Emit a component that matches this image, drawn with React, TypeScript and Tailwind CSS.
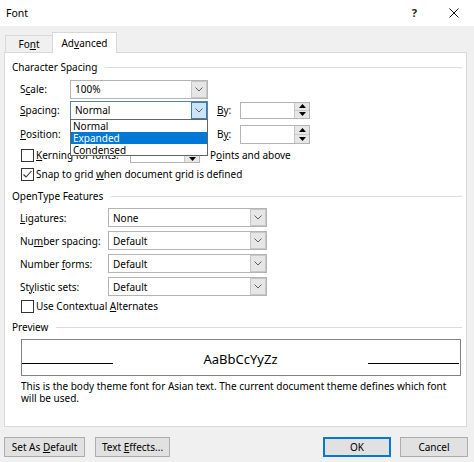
import React from "react";

const U = ({ c }: { c: string }) => <span className="underline underline-offset-[1px] decoration-[1px]">{c}</span>;

const Chevron = () => (
  <svg width="8" height="5" viewBox="0 0 8 5">
    <polyline points="0.5,0.5 4,4 7.5,0.5" fill="none" stroke="#606060" strokeWidth="1" />
  </svg>
);

const Combo = ({ value, w, focused }: { value: string; w: string; focused?: boolean }) => (
  <div className={`flex h-[19px] ${w} border ${focused ? "border-[#5b7fa6]" : "border-[#b4b4b4]"} bg-white`}>
    <div className="flex flex-1 items-center pl-[4px]">{value}</div>
    <div
      className={`flex w-[16px] items-center justify-center border ${
        focused ? "border-[#3c7fb1] bg-[#cce4f7]" : "border-[#c8c8c8] bg-[#e6e6e6]"
      }`}
    >
      <Chevron />
    </div>
  </div>
);

const Up = () => (
  <svg width="7" height="4" viewBox="0 0 7 4">
    <polygon points="0,4 3.5,0 7,4" fill="#000" />
  </svg>
);
const Down = () => (
  <svg width="7" height="4" viewBox="0 0 7 4">
    <polygon points="0,0 3.5,4 7,0" fill="#000" />
  </svg>
);

const Spin = ({ w, h }: { w: string; h: string }) => (
  <div className={`flex ${h} ${w} border border-[#b4b4b4] bg-white`}>
    <div className="flex-1" />
    <div className="flex w-[15px] flex-col border-l border-[#c8c8c8]">
      <div className="flex flex-1 items-center justify-center border-b border-[#c8c8c8] bg-[#e6e6e6]">
        <Up />
      </div>
      <div className="flex flex-1 items-center justify-center bg-[#e6e6e6]">
        <Down />
      </div>
    </div>
  </div>
);

const Check = ({ checked }: { checked?: boolean }) => (
  <div className="flex h-[13px] w-[13px] items-center justify-center border border-[#333333] bg-white">
    {checked && (
      <svg width="11" height="11" viewBox="0 0 11 11">
        <polyline points="1.5,5.5 4,8 9.5,2" fill="none" stroke="#333" strokeWidth="1.1" />
      </svg>
    )}
  </div>
);

const Header = ({ children }: { children: React.ReactNode }) => (
  <div className="flex h-[14px] items-center pl-[7px] pr-[4px]">
    <span className="whitespace-nowrap">{children}</span>
    <div className="ml-[8px] h-px flex-1 bg-[#dcdcdc]" />
  </div>
);

const Btn = ({ children, w, primary }: { children: React.ReactNode; w: string; primary?: boolean }) => (
  <div
    className={`flex h-[20px] ${w} items-center justify-center bg-[#e1e1e1] ${
      primary ? "border-2 border-[#0078d7]" : "border border-[#adadad]"
    }`}
  >
    {children}
  </div>
);

export default function App() {
  return (
    <div className="relative h-[462px] w-[474px] overflow-hidden bg-[#f0f0f0] font-['Noto_Sans',sans-serif] text-[10px] leading-[14px] text-black">
      {/* Title bar */}
      <div className="flex h-[26px] items-center bg-white pl-[6px] pr-[15px]">
        <span className="text-[10.5px]">Font</span>
        <span className="ml-auto mr-[32px] text-[11px] font-bold text-[#222]">?</span>
        <svg width="10" height="10" viewBox="0 0 10 10">
          <line x1="0.5" y1="0.5" x2="9.5" y2="9.5" stroke="#111" strokeWidth="1" />
          <line x1="9.5" y1="0.5" x2="0.5" y2="9.5" stroke="#111" strokeWidth="1" />
        </svg>
      </div>

      {/* Tabs */}
      <div className="flex h-[26px] items-end pl-[5px]">
        <div className="flex h-[17px] w-[47px] items-center justify-center border-l border-t border-[#d9d9d9] bg-[#f0f0f0]">
          <span>
            Fo<U c="n" />t
          </span>
        </div>
        <div className="relative z-10 -mb-px flex h-[21px] w-[65px] items-center justify-center border-l border-r border-t border-[#d9d9d9] bg-white">
          <span>
            Ad<U c="v" />anced
          </span>
        </div>
      </div>

      {/* Panel */}
      <div className="ml-[4px] flex h-[375px] w-[463px] flex-col border border-[#d9d9d9] bg-white pt-[7px]">
        <Header>Character Spacing</Header>

        <div className="mt-[5px] flex h-[20px] items-center pl-[15px]">
          <div className="w-[50px]">
            S<U c="c" />ale:
          </div>
          <Combo value="100%" w="w-[138px]" />
        </div>

        <div className="mt-[1px] flex h-[20px] items-center pl-[15px]">
          <div className="w-[50px]">
            <U c="S" />pacing:
          </div>
          <Combo value="Normal" w="w-[138px]" focused />
          <div className="ml-[9px] w-[23px]">
            <U c="B" />y:
          </div>
          <Spin w="w-[70px]" h="h-[17px]" />
        </div>

        <div className="mt-[4px] flex h-[20px] items-center pl-[15px]">
          <div className="w-[50px]">
            <U c="P" />osition:
          </div>
          <Combo value="" w="w-[138px]" />
          <div className="ml-[9px] w-[23px]">
            B<U c="y" />:
          </div>
          <Spin w="w-[70px]" h="h-[19px]" />
        </div>

        <div className="mt-[2px] flex h-[18px] items-center pl-[16px]">
          <Check />
          <div className="ml-[2px] w-[94px] whitespace-nowrap">
            <U c="K" />erning for fonts:
          </div>
          <Spin w="w-[70px]" h="h-[16px]" />
          <div className="ml-[10px]">
            P<U c="o" />ints and above
          </div>
        </div>

        <div className="mt-[2px] flex h-[16px] items-center pl-[16px]">
          <Check checked />
          <div className="ml-[2px]">
            Snap to grid <U c="w" />hen document grid is defined
          </div>
        </div>

        <div className="mt-[7px]">
          <Header>OpenType Features</Header>
        </div>

        {[
          [<><U c="L" />igatures:</>, "None"],
          [<>Nu<U c="m" />ber spacing:</>, "Default"],
          [<>Number <U c="f" />orms:</>, "Default"],
          [<>St<U c="y" />listic sets:</>, "Default"],
        ].map(([label, val], i) => (
          <div key={i} className={`${i === 0 ? "mt-[5px]" : "mt-[4px]"} flex h-[19px] items-center pl-[15px]`}>
            <div className="w-[88px]">{label}</div>
            <Combo value={val as string} w="w-[159px]" />
          </div>
        ))}

        <div className="mt-[2px] flex h-[16px] items-center pl-[16px]">
          <Check />
          <div className="ml-[2px]">
            Use Contextual <U c="A" />lternates
          </div>
        </div>

        <div className="mt-[6px]">
          <Header>Preview</Header>
        </div>

        <div className="ml-[16px] mt-[5px] flex h-[37px] w-[440px] items-center border border-[#828282]">
          <div className="mt-[11px] h-px w-[91px] bg-black" />
          <div className="mt-[3px] flex-1 text-center text-[13px] leading-[16px]">AaBbCcYyZz</div>
          <div className="mr-[1px] mt-[11px] h-px w-[91px] bg-black" />
        </div>

        <div className="ml-[16px] mt-[4px] w-[442px] leading-[12px]">
          This is the body theme font for Asian text. The current document theme defines which font will be used.
        </div>
      </div>

      {/* Buttons */}
      <div className="mt-[10px] flex pl-[4px] pr-[6px]">
        <Btn w="w-[81px]">
          <span>
            Set As <U c="D" />efault
          </span>
        </Btn>
        <div className="ml-[10px]">
          <Btn w="w-[75px]">
            <span>
              Text <U c="E" />ffects...
            </span>
          </Btn>
        </div>
        <div className="ml-auto">
          <Btn w="w-[68px]" primary>
            OK
          </Btn>
        </div>
        <div className="ml-[9px]">
          <Btn w="w-[68px]">Cancel</Btn>
        </div>
      </div>

      {/* Dropdown list overlay */}
      <div className="absolute left-[70px] top-[119px] z-20 flex w-[138px] flex-col border border-[#646464] bg-white leading-[12px]">
        <div className="h-[12px] pl-[2px]">Normal</div>
        <div className="h-[12px] bg-[#0078d7] pl-[2px] text-white">Expanded</div>
        <div className="h-[11px] pl-[2px]">Condensed</div>
      </div>
    </div>
  );
}
